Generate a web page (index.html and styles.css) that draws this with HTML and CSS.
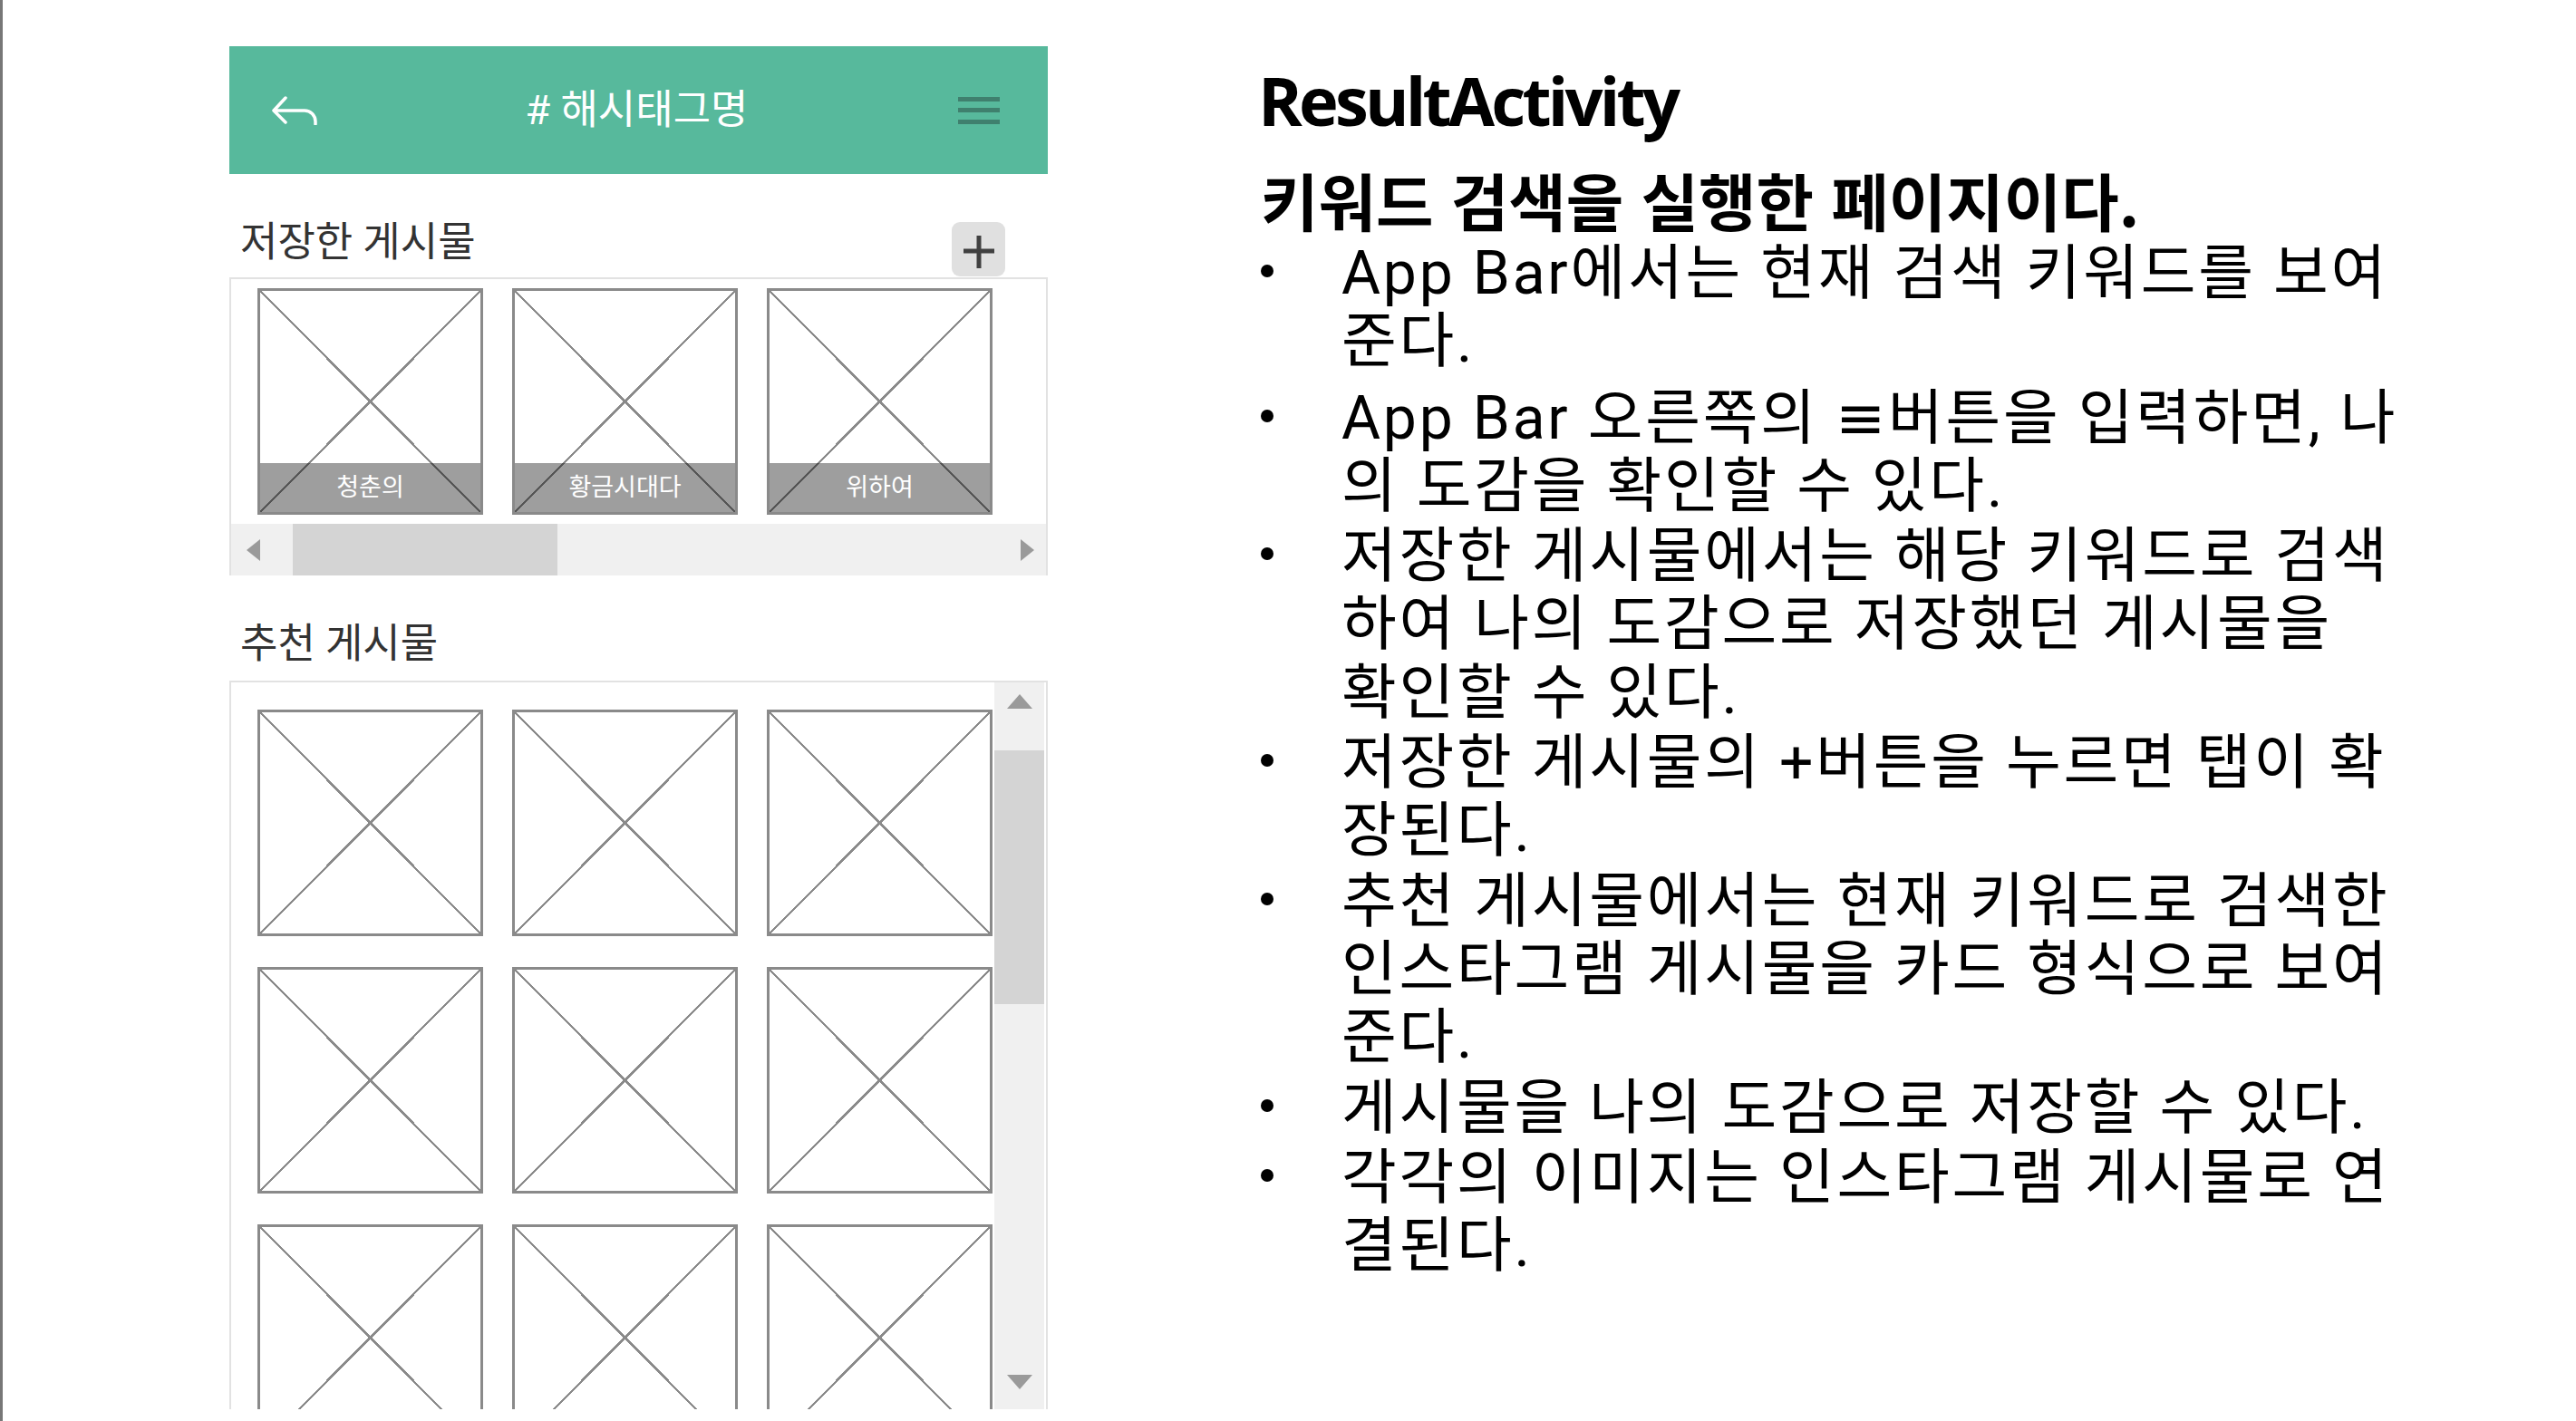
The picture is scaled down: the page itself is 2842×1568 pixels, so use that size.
FILE: index.html
```html
<!DOCTYPE html>
<html lang="ko">
<head>
  <meta charset="UTF-8">
  <meta name="viewport" content="width=device-width,initial-scale=1.0">
  <title>ResultActivity</title>
  <link rel="stylesheet" href="styles.css">
</head>
<body>
<div class="slide">

  <!-- 화면 목업 -->
  <div class="phone">
    <header class="app-bar">
      <svg class="back-icon" width="50" height="32" viewBox="0 0 50 32">
        <path d="M15 2 L2 16 L15 29 M2 16 H36 A12 12 0 0 1 48 28 V31" />
      </svg>
      <h1 class="app-title"># 해시태그명</h1>
      <div class="menu-icon"><span></span><span></span><span></span></div>
    </header>

    <!-- 저장한 게시물 -->
    <div class="section-head">
      <h2 class="section-title">저장한 게시물</h2>
      <button class="add-button">
        <svg width="36" height="38" viewBox="0 0 36 38"><path d="M18 1 V37 M1 18 H35" /></svg>
      </button>
    </div>
    <div class="saved-box">
      <div class="saved-row">
        <div class="card"><div class="card-caption">청춘의</div></div>
        <div class="card"><div class="card-caption">황금시대다</div></div>
        <div class="card"><div class="card-caption">위하여</div></div>
      </div>
      <div class="h-scroll">
        <span class="arrow arrow-left"></span>
        <span class="h-thumb"></span>
        <span class="arrow arrow-right"></span>
      </div>
    </div>

    <!-- 추천 게시물 -->
    <div class="section-head rec-head">
      <h2 class="section-title">추천 게시물</h2>
    </div>
    <div class="rec-box">
      <div class="rec-grid">
        <div class="card"></div><div class="card"></div><div class="card"></div>
        <div class="card"></div><div class="card"></div><div class="card"></div>
        <div class="card"></div><div class="card"></div><div class="card"></div>
      </div>
      <div class="v-scroll">
        <span class="arrow arrow-up"></span>
        <span class="v-thumb"></span>
        <span class="arrow arrow-down"></span>
      </div>
    </div>
  </div>

  <!-- 설명 -->
  <div class="notes">
    <h1 class="notes-title">ResultActivity</h1>
    <h2 class="notes-lead">키워드 검색을 실행한 페이지이다.</h2>
    <ul class="notes-list">
      <li>App Bar에서는 현재 검색 키워드를 보여<br>준다.</li>
      <li>App Bar 오른쪽의 ≡버튼을 입력하면, 나<br>의 도감을 확인할 수 있다.</li>
      <li>저장한 게시물에서는 해당 키워드로 검색<br>하여 나의 도감으로 저장했던 게시물을<br>확인할 수 있다.</li>
      <li>저장한 게시물의 +버튼을 누르면 탭이 확<br>장된다.</li>
      <li>추천 게시물에서는 현재 키워드로 검색한<br>인스타그램 게시물을 카드 형식으로 보여<br>준다.</li>
      <li>게시물을 나의 도감으로 저장할 수 있다.</li>
      <li>각각의 이미지는 인스타그램 게시물로 연<br>결된다.</li>
    </ul>
  </div>

</div>
</body>
</html>
```

FILE: styles.css
```css
/* 기본 */
* { margin:0; padding:0; box-sizing:border-box; }
body { background:#fff; height:1568px; overflow:hidden; }
.slide {
  display:flex; height:1568px;
  border-left:3px solid #777;
}

/* 화면 목업 */
.phone {
  width:903px; height:1504px; margin:51px 0 0 250px;
  font-family:Roboto,'Noto Sans CJK KR',sans-serif;
  display:flex; flex-direction:column;
}
.app-bar {
  height:141px; flex:none; background:#57b99c;
  display:flex; align-items:center; justify-content:space-between;
  padding:0 53px 0 47px;
}
.back-icon { fill:none; stroke:#fff; stroke-width:3.5; stroke-linecap:round; stroke-linejoin:round; }
.app-title {
  font-size:45px; font-weight:400; color:#fff; line-height:50px;
  margin-left:-2px;
}
.menu-icon { width:46px; display:flex; flex-direction:column; gap:7.5px; }
.menu-icon span { height:5px; background:#3f806e; }

.section-head {
  height:61px; flex:none; margin-top:53px; padding:0 47px 0 12px;
  display:flex; justify-content:space-between; align-items:flex-start;
}
.rec-head { height:63px; }
.section-title { font-size:45px; font-weight:400; color:#333; line-height:46px; }
.add-button {
  width:59px; height:60px; border:none; border-radius:9px;
  background:#e0e0e0; padding-top:6px;
}
.add-button svg { fill:none; stroke:#404040; stroke-width:5; display:block; margin:0 auto; }

/* 카드 */
.card {
  width:249px; height:250px; border:3px solid #8a8a8a;
  display:flex; flex-direction:column; justify-content:flex-end;
  background:
    linear-gradient(to top right, transparent calc(50% - 1.2px), #8a8a8a calc(50% - 1.2px), #8a8a8a calc(50% + 1.2px), transparent calc(50% + 1.2px)),
    linear-gradient(to bottom right, transparent calc(50% - 1.2px), #8a8a8a calc(50% - 1.2px), #8a8a8a calc(50% + 1.2px), transparent calc(50% + 1.2px));
}
.card-caption {
  height:54px; background:rgba(0,0,0,.38);
  color:#fff; font-size:27px; text-align:center; line-height:54px;
}

/* 저장한 게시물 */
.saved-box { border:2px solid #e2e2e2; border-bottom:none; flex:none; }
.saved-row { display:flex; gap:32px; padding:10px 0 10px 29px; }
.h-scroll { height:57px; background:#f0f0f0; display:flex; align-items:center; }
.h-thumb { width:292px; height:100%; background:#d4d4d4; margin-left:36px; }
.arrow { width:0; height:0; border-style:solid; border-color:transparent; flex:none; }
.arrow-left { border-width:12px 15px 12px 0; border-right-color:#9a9a9a; margin-left:17px; }
.arrow-right { border-width:12px 0 12px 15px; border-left-color:#9a9a9a; margin-left:auto; margin-right:13px; }

/* 추천 게시물 */
.rec-box {
  flex:1; display:flex; overflow:hidden;
  border:2px solid #e2e2e2; border-bottom:none;
}
.rec-grid {
  flex:1; display:grid; grid-template-columns:repeat(3,249px);
  column-gap:32px; row-gap:34px; align-content:start;
  padding:30px 0 0 29px;
}
.v-scroll {
  width:55px; margin-right:2px; background:#f0f0f0;
  display:flex; flex-direction:column; align-items:center;
}
.v-thumb { width:100%; height:280px; background:#d4d4d4; margin-top:46px; }
.arrow-up { border-width:0 14px 16px 14px; border-bottom-color:#9a9a9a; margin-top:13px; }
.arrow-down { border-width:16px 14px 0 14px; border-top-color:#9a9a9a; margin-top:auto; margin-bottom:22px; }

/* 설명 */
.notes {
  margin-left:235px; padding-top:66px; color:#000;
  font-family:'Noto Sans CJK KR',sans-serif;
}
.notes-title {
  font-family:'Open Sans','Noto Sans CJK KR',sans-serif;
  font-size:74px; font-weight:700; line-height:90px; letter-spacing:-3.8px;
  margin-left:-3px;
}
.notes-lead { font-size:69px; font-weight:700; line-height:76px; margin-top:26px; }
.notes-list {
  list-style:none; margin-top:6px;
  font-family:Roboto,'DejaVu Sans','Noto Sans CJK KR',sans-serif;
  font-size:66px; line-height:75.3px; letter-spacing:2.8px;
}
.notes-list li { display:grid; grid-template-columns:89px auto; margin-top:2px; }
.notes-list li:first-child { margin-top:0; margin-bottom:9px; }
.notes-list li::before {
  content:""; width:14px; height:14px; border-radius:50%;
  background:#000; margin-top:28px;
}
```
